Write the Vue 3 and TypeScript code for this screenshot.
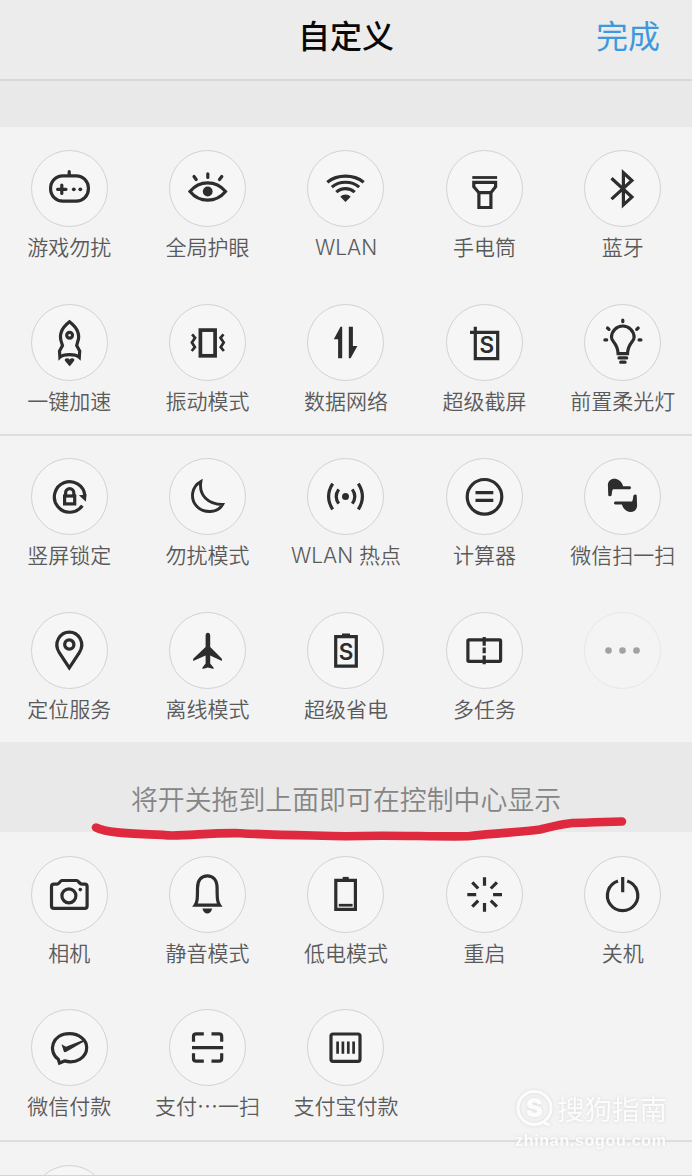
<script setup lang="ts">
interface Shortcut {
  icon: string
  label: string
  faded?: boolean
}

const sections: Record<'primary' | 'secondary' | 'hidden', Shortcut[]> = {
  primary: [
    { icon: 'game', label: '游戏勿扰' },
    { icon: 'eye', label: '全局护眼' },
    { icon: 'wifi', label: 'WLAN' },
    { icon: 'torch', label: '手电筒' },
    { icon: 'bluetooth', label: '蓝牙' },
    { icon: 'rocket', label: '一键加速' },
    { icon: 'vibrate', label: '振动模式' },
    { icon: 'data', label: '数据网络' },
    { icon: 'capture', label: '超级截屏' },
    { icon: 'bulb', label: '前置柔光灯' },
  ],
  secondary: [
    { icon: 'lock', label: '竖屏锁定' },
    { icon: 'moon', label: '勿扰模式' },
    { icon: 'hotspot', label: 'WLAN 热点' },
    { icon: 'calc', label: '计算器' },
    { icon: 'wescan', label: '微信扫一扫' },
    { icon: 'pin', label: '定位服务' },
    { icon: 'plane', label: '离线模式' },
    { icon: 'saver', label: '超级省电' },
    { icon: 'split', label: '多任务' },
    { icon: 'more', label: '', faded: true },
  ],
  hidden: [
    { icon: 'camera', label: '相机' },
    { icon: 'bell', label: '静音模式' },
    { icon: 'battery', label: '低电模式' },
    { icon: 'restart', label: '重启' },
    { icon: 'power', label: '关机' },
    { icon: 'wepay', label: '微信付款' },
    { icon: 'scan', label: '支付⋯一扫' },
    { icon: 'barcode', label: '支付宝付款' },
  ],
}

// Icon markup is drawn around the origin, which is the centre of the round button.
const icons: Record<string, string> = {
  game: `<rect x="-18.9" y="-12.6" width="37.8" height="25.2" rx="12.2"/><path d="M-.3-17v4M-7.7-3.4v8.4M-11.9.8h8.4" stroke-linecap="round"/><g class="solid"><circle cx="4.3" cy=".8" r="1.9"/><circle cx="10.8" cy=".8" r="1.9"/></g>`,
  eye: `<path d="M-17.5 3C-8-8.4 8.4-8.4 18 3 8.4 14.6-8 14.6-17.5 3Z"/><circle class="solid" cx=".2" cy="3" r="4.9"/><path d="M.3-14.7v3.6M-13.5-12l2.2 3M14.3-12l-2.3 3" stroke-linecap="round"/>`,
  wifi: `<path d="M-18.2-6.3C-8-14.3 8-14.3 18.2-6.3M-13.7-1.4C-6-7.9 6-7.9 13.7-1.4M-9.2 3.6C-4-1.1 4-1.1 9.2 3.6"/><path class="solid" d="M-5.2 8.2C-2.2 5.2 2.2 5.2 5.2 8.2L0 13.6Z"/>`,
  torch: `<path d="M-12.2-11h24.8" stroke-width="2.8"/><path d="M-10.7-6.2h21.8v4.4L6.4 4.2h-12L-10.7-1.8ZM-5.6 4.2V19H6.4V4.2"/>`,
  bluetooth: `<path d="M-11-10.2 9.4 8.6.9 16.4v-32.2L9.4-8 -11 10.6"/>`,
  rocket: `<path d="M0-20.7C-8-14.5-11.2-8-7.8.5L-7 3-10 8.5-9.6 14.7C-6 11.2 6 11.2 9.8 14.7L10.2 8.5 7.2 3 8-.1C11.2-8 8-14.5 0-20.7Z"/><circle cx=".1" cy="-7.3" r="2.9"/><path class="solid" d="M-4.9 17.4C-3.4 15.2-1 15.6.2 17 1.4 15.6 3.7 15.2 5 17.4 4 19.4 2 21.5.2 23.8-1.6 21.5-4 19.4-4.9 17.4Z"/>`,
  vibrate: `<rect x="-7.1" y="-12.4" width="14.7" height="25.7" stroke-width="3.7"/><path d="M-15.4-8.1l3 3.4-3.2 4.7 3 4.7-3.2 3.8M16-8.1l-3 3.4L16.2 0l-3 4.7 3.2 3.8" stroke-width="2.7"/>`,
  data: `<path class="solid" d="M-3.3-15.8V15.8h-4.1V-3.2h-4.3L-5-15.8ZM3.3 15.8V-15.8h4.1V3.4h4.5L5.1 15.8Z"/>`,
  capture: `<path d="M-14.5-10.1H13.2V16.1H-9.2v-31.8"/><text x="2.3" y="10.6">S</text>`,
  bulb: `<path d="M-4.4 11.2C-5-.1-11-.2-11-5.2a11.3 11.3 0 0 1 22.6 0C11.6-.2 5.6-.1 5 11.2Z"/><path d="M-3.5 15.4h7.7M-1.8 19.7h4.4M.3-22.4v1.6M-17.6-2.6h1.8M16.6-2.6h1.8M-15-14.5l1.5 1.4M15.7-14.5l-1.5 1.4" stroke-linecap="round"/>`,
  lock: `<path d="M12.8 9.1A15.3 15.3 0 1 1 15.4-1"/><path class="solid" d="M9.4-1.2 17-2 16.4 5.2Z"/><rect x="-4.9" y="-.5" width="10.1" height="7.9"/><path d="M-3.9-.7v-3a4.1 4.1 0 0 1 8.2 0v3"/>`,
  moon: `<path d="M-6.6-15.1C-16-10-17.5 2-11.1 9.4-4 17.3 10.2 17 15.1 8 1 8-9-1-6.6-15.1Z" stroke-width="2.9"/>`,
  hotspot: `<circle class="solid" r="3.5"/><path d="M-6.8-7.1Q-11.8 0-6.8 7.1M6.8-7.1Q11.8 0 6.8 7.1M-12.8-12.9Q-21 0-12.8 12.9M12.8-12.9Q21 0 12.8 12.9"/>`,
  calc: `<circle cy=".3" r="17.3"/><path d="M-9-3.9H8.8M-9 3.9H8.8"/>`,
  wescan: `<g class="solid"><path d="M-14.2-1-14.6-11C-14.8-19.5-2.5-20.4.6-10.3H7.3a1.6 1.6 0 0 1 0 3.1H-9.6Q-10.6-6-10.8-1.8C-11-.1-13.8.3-14.2-1Z"/><path transform="rotate(180 0 -1.1)" d="M-14.2-1-14.6-11C-14.8-19.5-2.5-20.4.6-10.3H7.3a1.6 1.6 0 0 1 0 3.1H-9.6Q-10.6-6-10.8-1.8C-11-.1-13.8.3-14.2-1Z"/></g>`,
  pin: `<path d="M-.2 17.3-10.2 2.2C-16.6-8-9.2-18.4-.2-18.4S16.2-8 9.8 2.2Z"/><circle cx="-.2" cy="-6" r="4.6" stroke-width="3.3"/>`,
  plane: `<path class="solid" d="M.4-17.8C1.8-17.8 2.7-16.6 2.7-15V-3.6L14.4 8.2V10.5L2.7 5.1V13L6 17v1.5L.4 17-5 18.5V17l3.1-4V5.1L-14.3 10.5V8.2L-1.9-3.6V-15C-1.9-16.6-1-17.8.4-17.8Z"/>`,
  saver: `<path d="M-9.8-13.8H10.8V15.6H-9.8ZM-3.5-15.5h8"/><text x=".5" y="9.8">S</text>`,
  split: `<rect x="-16.6" y="-10.6" width="32.7" height="21.4" rx="1"/><path d="M-.3-13.4v8.7M-.3-3v5.8M-.3 5v8.8"/>`,
  more: `<g fill="#a2a2a2" stroke="none"><circle cx="-14" r="3.3"/><circle r="3.3"/><circle cx="14" r="3.3"/></g>`,
  camera: `<path d="M-18-8Q-18-10.3-15.6-10.3H-12.5C-10-10.3-9.4-14-7.5-14H7.1C9-14 9.8-10.3 12.4-10.3H15.3Q17.6-10.3 17.6-8V11.5Q17.6 13.8 15.3 13.8H-15.6Q-18 13.8-18 11.5Z"/><circle cx="-.6" cy="1.3" r="7"/><circle class="solid" cx="10.8" cy="-4.9" r="1.8"/>`,
  bell: `<path d="M-12.3 10.6C-10.3 7.7-10 5-10-6.5-10-14.8-5.7-18.7-.2-18.7S9.6-14.8 9.6-6.5C9.6 5 10 7.7 12 10.6Z"/><path class="solid" d="M-5 14H4.6C4 17.2 2 19-.2 19S-4.4 17.2-5 14Z"/>`,
  battery: `<path d="M-9.7-14.1H9.9V14.9H-9.7Z"/><path d="M-2.8-16h6"/><path d="M-6.7 10.7H7.1" stroke-width="2.7"/>`,
  restart: `<path d="M0-17.3v8.6M0 8.5v8.7M-17.2.1h8.9M8.6.1h8.9M-12.2-12.2l5.9 6.2M12.4-12.2l-6.1 6.2M-12.2 12.2l5.9-6M12.4 12.2l-6.1-6"/>`,
  power: `<path d="M-4.5-13.5A15.2 15.2 0 1 0 4.7-13.5M.2-17.5v15.3"/>`,
  wepay: `<path d="M-11.2 11.7C-22 4-17.5-13.8-.1-13.8 9.5-13.8 17.2-7.7 17.2.1 17.2 10.6 6 16.5-5 13.4L-10 15.5Z"/><path class="solid" d="M-8-3.2-3.6-.8 14.2-7.7 15.4-6.5-1.8 3.6Q-4.6 5.5-5.6 4.3Z"/>`,
  scan: `<path d="M-14-5.7V-11Q-14-13.6-11.4-13.6H-3.7M4-13.6h7.6Q14.2-13.6 14.2-11v5.3M-14 5.8V11Q-14 13.7-11.4 13.7H-3.7M4 13.7h7.6Q14.2 13.7 14.2 11V5.8M-15.5.1H15.6"/>`,
  barcode: `<rect x="-14.5" y="-13.5" width="29" height="27.3" rx="2"/><path d="M-7.9-6V6.3M-2.6-6V6.3M2.8-6V6.3M8.1-6V6.3" stroke-width="2.7"/>`,
}
</script>

<template>
  <div class="page">
    <header class="bar">
      <span></span>
      <h1>自定义</h1>
      <a class="done">完成</a>
    </header>
    <div class="spacer"></div>
    <template v-for="(items, key) in sections" :key="key">
      <p v-if="key === 'hidden'" class="hint">
        将开关拖到上面即可在控制中心显示
        <svg class="mark" width="540" height="30" viewBox="90 812 540 30">
          <path d="M96 827.5C108 834 140 833.5 172 835.5C196 835 212 832.8 240 833.2C280 835.4 310 835.3 346 836.3C390 834.5 430 837 468 836.3C500 832.5 520 832.5 540 829.5C560 824.5 568 822.6 584 822.8C600 822 608 821.7 622 821.5" />
        </svg>
      </p>
      <section class="grid" :class="key">
        <div v-for="item in items" :key="item.icon" class="item">
          <span class="button" :class="{ faded: item.faded }">
            <svg class="icon" viewBox="-37.5 -37.5 75 75" v-html="icons[item.icon]"></svg>
          </span>
          <span class="label">{{ item.label }}</span>
        </div>
      </section>
    </template>
    <section class="grid last">
      <div class="item"><span class="button"></span></div>
    </section>
    <div class="watermark">
      <div class="brand">
        <svg width="38" height="40" viewBox="0 0 38 40">
          <circle cx="19.5" cy="20" r="16.5" />
          <path d="M29 35l6 2" />
          <text x="19.5" y="29">S</text>
        </svg>
        <span>搜狗指南</span>
      </div>
      <div class="site">zhinan.sogou.com</div>
    </div>
  </div>
</template>

<style>
html,
body {
  margin: 0;
  overflow: hidden;
}
</style>

<style scoped>
.page {
  position: relative;
  width: 692px;
  height: 1176px;
  overflow: hidden;
  box-sizing: border-box;
  background: #f3f3f3;
  font-family: "Noto Sans CJK SC", sans-serif;
}
.page::after {
  content: "";
  position: absolute;
  inset: auto 0 0;
  height: 1px;
  background: #d4d4d4;
}
.bar {
  display: grid;
  grid-template-columns: 1fr auto 1fr;
  align-items: center;
  box-sizing: border-box;
  height: 81px;
  padding: 0 32px 11px;
  border-bottom: 2px solid #d8d8d8;
  background: #ececec;
}
h1 {
  margin: 0;
  font-size: 32px;
  font-weight: 500;
  line-height: 40px;
  color: #080808;
}
.done {
  justify-self: end;
  font-size: 32px;
  line-height: 40px;
  color: #3e99dc;
}
.spacer {
  height: 46px;
  background: #e9e9e9;
}
.grid {
  display: grid;
  grid-template-columns: repeat(5, 1fr);
  grid-auto-rows: 153.8px;
  box-sizing: border-box;
}
.primary {
  height: 309px;
  border-bottom: 2px solid #dedede;
}
.secondary {
  height: 306px;
}
.item {
  display: flex;
  flex-direction: column;
  align-items: center;
  padding-top: 23.4px;
}
.secondary .item {
  padding-top: 22px;
}
.hidden {
  height: 309.5px;
  border-bottom: 2px solid #dedede;
}
.hidden .item {
  padding-top: 23.6px;
}
.button {
  display: block;
  flex: none;
  box-sizing: border-box;
  width: 77px;
  height: 77px;
  border: 1px solid #d2d2d2;
  border-radius: 50%;
  background: #f6f6f6;
}
.faded {
  border-color: #e7e7e7;
  background: #f4f4f4;
}
.icon {
  display: block;
  width: 75px;
  height: 75px;
  fill: none;
  stroke: #2d2d2d;
  stroke-width: 3.2;
}
.icon :deep(.solid) {
  fill: #2d2d2d;
  stroke: none;
}
.icon :deep(text) {
  fill: #2d2d2d;
  stroke: none;
  font: 600 22.5px Inter, sans-serif;
  text-anchor: middle;
}
.label {
  margin-top: 6px;
  font-family: Inter, "Noto Sans CJK SC", sans-serif;
  font-size: 21px;
  font-weight: 350;
  line-height: 30px;
  color: #5a5a5a;
  white-space: nowrap;
}
.hint {
  position: relative;
  height: 90px;
  margin: 0;
  background: #e9e9e9;
  color: #858585;
  font-size: 26.9px;
  font-weight: 350;
  line-height: 114px;
  text-align: center;
}
.mark {
  position: absolute;
  left: 90px;
  top: 70px;
  fill: none;
  stroke: #df293e;
  stroke-width: 8.6;
  stroke-linecap: round;
  stroke-linejoin: round;
}
.watermark {
  position: absolute;
  left: 515px;
  top: 1088px;
  color: #fcfcfc;
  filter: drop-shadow(0 0 1.5px #d8d8d8);
}
.brand {
  display: flex;
  align-items: center;
  gap: 4px;
  font-size: 27.5px;
  line-height: 40px;
}
.brand svg {
  fill: none;
  stroke: #fcfcfc;
  stroke-width: 3;
}
.brand text {
  fill: #fcfcfc;
  stroke: none;
  font: 900 26px Inter, sans-serif;
  text-anchor: middle;
}
.site {
  margin-top: 3px;
  font: 700 16px/20px "Liberation Sans", sans-serif;
  letter-spacing: 0.7px;
}
</style>
